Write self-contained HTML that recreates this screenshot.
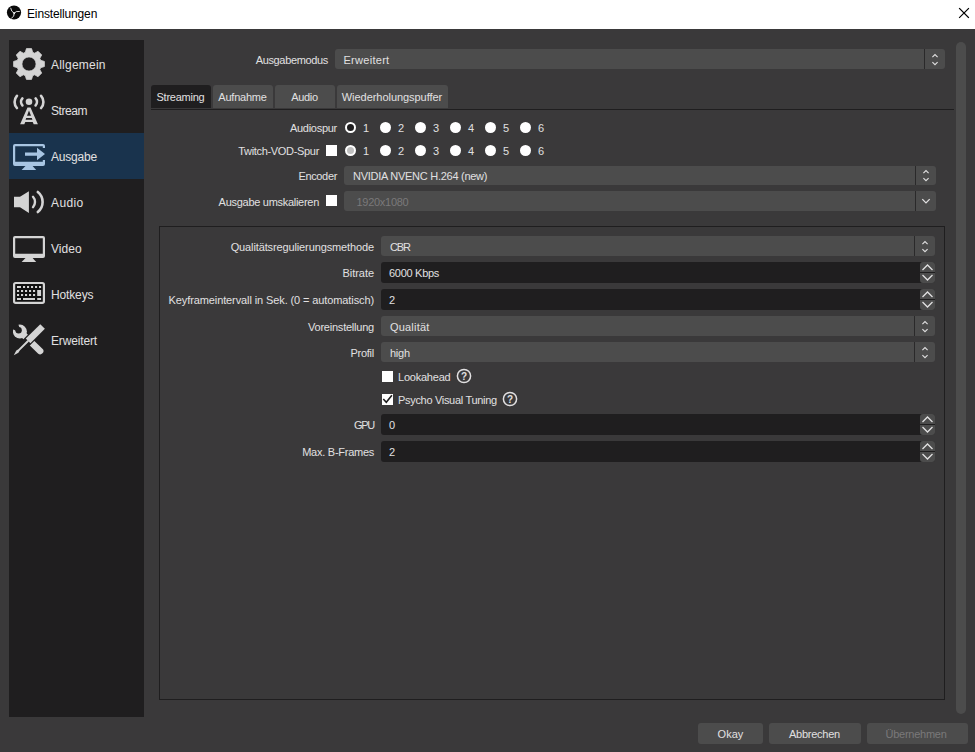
<!DOCTYPE html>
<html lang="de">
<head>
<meta charset="utf-8">
<title>Einstellungen</title>
<style>
*{box-sizing:border-box;margin:0;padding:0}
html,body{width:975px;height:752px;overflow:hidden;background:#3a393a}
body{position:relative;font-family:"Liberation Sans",sans-serif;font-size:11px;color:#e1e0e1;line-height:14px}
.abs,.t,.lbl,.combo,.spin,.cb,.rd,.btn,.tab,.item{position:absolute}
.t,.lbl{white-space:nowrap;height:14px}
.lbl{text-align:right}
#titlebar{left:0;top:0;width:975px;height:29px;background:#fff}
#title{left:27px;top:6px;font-size:12px;color:#000;height:16px;line-height:16px}
#sidebar{left:9px;top:40px;width:135px;height:677px;background:#1f1e1f}
.item{left:0;width:135px;height:46px}
.item.sel{background:#19334d}
.item>svg{position:absolute;left:4px;top:7px;width:32px;height:32px}
.item>span{position:absolute;left:42px;top:17px;height:14px;white-space:nowrap;font-size:12px}
.combo{background:#4c4c4c;border-radius:3px;height:20px}
.combo .sep{position:absolute;right:20px;top:0;width:1px;height:100%;background:#2a292a}
.combo .v{position:absolute;left:9px;top:4px;white-space:nowrap}
.combo svg{position:absolute;right:0;top:0;width:20px;height:20px}
.combo.dis .v{color:#7a797a}
.spin{background:#1f1e1f;border-radius:3px;height:21px}
.spin .v{position:absolute;left:8px;top:4px;white-space:nowrap}
.spin .ud{position:absolute;right:0;top:0;width:15px;height:21px;background:#4c4c4c;border-radius:3px}
.spin .ud i{position:absolute;left:0;top:10px;width:15px;height:1px;background:#1f1e1f}
.spin .ud svg{position:absolute;left:0;top:0;width:15px;height:21px}
.cb{width:11px;height:11px;background:#fff}
.rd{width:11px;height:11px;border-radius:50%;background:#fff}
.rd.on{background:#1f1e1f;border:2px solid #fff}
.rd.ond{background:#c0c0c0;border:2px solid #fff}
.tab{top:85px;height:23px;padding-right:1px;background:#4c4c4c;border-top-left-radius:3px;border-top-right-radius:3px;text-align:center;line-height:24px}
.tab.sel{background:#1f1e1f}
.btn{top:723px;height:21px;background:#4c4c4c;border-radius:3px;text-align:center;line-height:23px}
.btn.dis{color:#7a797a}
</style>
</head>
<body>
<div id="titlebar" class="abs"></div>
<svg class="abs" style="left:6px;top:5.4px;width:16px;height:16px" viewBox="0 0 16 16">
<circle cx="8" cy="7.5" r="7.1" fill="#0a0a0a"/>
<g fill="none" stroke="#e6e6e6" stroke-width="0.95" stroke-linecap="round">
<path d="M8.1 8.3Q5 6.6 4.7 3.2"/>
<path d="M8.1 8.3Q9.6 5.6 13.4 6.4"/>
<path d="M8.1 8.3Q8.9 11.6 5.6 13.2"/>
</g>
<path d="M7 7.4L9.3 7.2L8.6 9.6Z" fill="#fff"/>
</svg>
<div id="title" class="t"><span style="letter-spacing:-0.146px">Einstellungen</span></div>
<svg class="abs" style="left:958px;top:7px;width:13px;height:13px" viewBox="0 0 13 13"><path d="M1.5 1.5l9 9M10.5 1.5l-9 9" stroke="#000" stroke-width="1.1" stroke-linecap="square" fill="none"/></svg>

<div id="sidebar" class="abs">
<div class="item" style="top:1px"><svg viewBox="0 0 32 32" id="ic-gear"><path fill="#d4d4d4" stroke="#d4d4d4" stroke-width="0.8" stroke-linejoin="round" fill-rule="evenodd" d="M12.33 4.36 L13.43 0.61 L18.57 0.61 L19.67 4.36 L21.63 5.18 L25.06 3.30 L28.70 6.94 L26.82 10.37 L27.64 12.33 L31.39 13.43 L31.39 18.57 L27.64 19.67 L26.82 21.63 L28.70 25.06 L25.06 28.70 L21.63 26.82 L19.67 27.64 L18.57 31.39 L13.43 31.39 L12.33 27.64 L10.37 26.82 L6.94 28.70 L3.30 25.06 L5.18 21.63 L4.36 19.67 L0.61 18.57 L0.61 13.43 L4.36 12.33 L5.18 10.37 L3.30 6.94 L6.94 3.30 L10.37 5.18Z M8.9 16 a7.1 7.1 0 1 0 14.2 0 a7.1 7.1 0 1 0 -14.2 0Z"/></svg><span><span style="letter-spacing:0.22px">Allgemein</span></span></div>
<div class="item" style="top:47px"><svg viewBox="0 0 32 32" id="ic-stream"><circle cx="16" cy="7.8" r="3.3" fill="#d4d4d4"/>
<g fill="none" stroke="#d4d4d4" stroke-width="2.6" stroke-linecap="round"><path d="M3.9 1.8A9.2 9.2 0 0 0 3.9 14"/><path d="M28.1 1.8A9.2 9.2 0 0 1 28.1 14"/><path d="M9.4 4.4A5.3 5.3 0 0 0 9.4 11.4"/><path d="M22.6 4.4A5.3 5.3 0 0 1 22.6 11.4"/></g>
<path fill="#d4d4d4" fill-rule="evenodd" d="M14.5 13.5H17.5L24.9 30.3H20.7L19.7 28.1H12.3L11.3 30.3H7.1Z M16 16.4L18 21.7H14Z M13.2 24H18.8L19.4 25.8H12.6Z"/></svg><span><span style="letter-spacing:-0.417px">Stream</span></span></div>
<div class="item sel" style="top:93px"><svg viewBox="0 0 32 32" id="ic-out"><path fill="#a8c5e2" fill-rule="evenodd" d="M2 4H30A2 2 0 0 1 32 6V8H29.8V6.2H2.2V21.7H29.8V20H32V24A2 2 0 0 1 30 26H2A2 2 0 0 1 0 24V6A2 2 0 0 1 2 4Z"/>
<path fill="#a8c5e2" d="M12.5 26H19.6L23.2 30H8.6Z"/>
<path fill="#a8c5e2" d="M12 12.4H24V7.7L32 14L24 20.3V15.8H12Z"/></svg><span><span style="letter-spacing:-0.200px">Ausgabe</span></span></div>
<div class="item" style="top:139px"><svg viewBox="0 0 32 32" id="ic-audio"><path fill="#d4d4d4" d="M1 10.8H7L15.9 5.3V27L7 21.2H1Z"/>
<g fill="none" stroke="#d4d4d4" stroke-width="2.4" stroke-linecap="round"><path d="M20 10.8A7.8 7.8 0 0 1 20 21.2"/><path d="M24.8 6A12.8 12.8 0 0 1 24.8 26" stroke-width="2.6"/></g></svg><span><span style="letter-spacing:0.38px">Audio</span></span></div>
<div class="item" style="top:185px"><svg viewBox="0 0 32 32" id="ic-video"><path fill="#d4d4d4" fill-rule="evenodd" d="M2 4H30A2 2 0 0 1 32 6V24A2 2 0 0 1 30 26H2A2 2 0 0 1 0 24V6A2 2 0 0 1 2 4Z M2.2 6.2V21.7H29.8V6.2Z"/>
<path fill="#d4d4d4" d="M12.5 26H19.6L23.2 30H8.6Z"/></svg><span><span style="letter-spacing:0.06px">Video</span></span></div>
<div class="item" style="top:231px"><svg viewBox="0 0 32 32" id="ic-keys"><rect x="1.1" y="5" width="29.8" height="19.9" rx="1.6" fill="#111" stroke="#d4d4d4" stroke-width="2.2"/>
<path fill="#d4d4d4" d="M4 8h4v2.1h-4z M10 8h2.1v2.1h-2.1z M14 8h2.1v2.1h-2.1z M18 8h2.1v2.1h-2.1z M22 8h2.1v2.1h-2.1z M26 8h2.1v2.1h-2.1z M4 12h2.1v2.1h-2.1z M8 12h2.1v2.1h-2.1z M12 12h2.1v2.1h-2.1z M16 12h2.1v2.1h-2.1z M20 12h2.1v2.1h-2.1z M4 16h2.1v2.1h-2.1z M8 16h2.1v2.1h-2.1z M12 16h2.1v2.1h-2.1z M16 16h2.1v2.1h-2.1z M20 16h2.1v2.1h-2.1z M24.2 12h3.9v6.1h-3.9z M4 20h4v2.1h-4z M10 20h12v2.1h-12z M24.2 20h3.9v2.1h-3.9z"/></svg><span><span style="letter-spacing:-0.143px">Hotkeys</span></span></div>
<div class="item" style="top:277px"><svg viewBox="0 0 32 32" id="ic-adv"><path d="M7 7.5L27.2 27.1" stroke="#d4d4d4" stroke-width="6.4" stroke-linecap="round" fill="none"/>
<circle cx="6.9" cy="7.6" r="7" fill="#d4d4d4"/>
<circle cx="5.6" cy="6.2" r="3.2" fill="#1f1e1f"/>
<path d="M5.6 6.2L-1 3 3 -1Z" fill="#1f1e1f" stroke="#1f1e1f" stroke-width="3.4" stroke-linejoin="round"/>
<g transform="rotate(45 16 16)"><rect x="11.5" y="-3" width="9" height="30" fill="#1f1e1f"/><rect x="12.75" y="-3.2" width="6.5" height="20.5" fill="#d4d4d4"/><path fill="#d4d4d4" d="M15 17h2v13l.5 2.5-1.5 5-1.5-5 .5-2.5z"/></g></svg><span><span style="letter-spacing:-0.144px">Erweitert</span></span></div>
</div>

<!-- scrollbar -->
<div class="abs" style="left:956px;top:42px;width:10px;height:672px;background:#4c4c4c;border-radius:5px"></div>

<!-- top row -->
<div class="lbl" style="left:228px;width:100px;top:53px"><span style="letter-spacing:-0.342px">Ausgabemodus</span></div>
<div class="combo" style="left:335px;top:49px;width:610px"><span class="v" style="left:8.5px"><span style="letter-spacing:0.28px">Erweitert</span></span><div class="sep"></div><svg viewBox="0 0 20 20"><path d="M7.4 8.1l2.6-2.6 2.6 2.6M7.4 13.1l2.6 2.6 2.6-2.6" fill="none" stroke="#e1e0e1" stroke-width="1.1"/></svg></div>

<!-- tabs -->
<div class="tab sel" style="left:151px;width:60px"><span style="letter-spacing:-0.233px">Streaming</span></div>
<div class="tab" style="left:213px;width:60px"><span style="letter-spacing:-0.225px">Aufnahme</span></div>
<div class="tab" style="left:275px;width:60px"><span style="letter-spacing:-0.340px">Audio</span></div>
<div class="tab" style="left:337px;width:111px"><span style="letter-spacing:-0.047px">Wiederholungspuffer</span></div>
<div class="abs" style="left:151px;top:109px;width:803px;height:1px;background:#1f1e1f"></div>

<!-- audio track rows -->
<div class="lbl" style="left:237px;width:100px;top:121px"><span style="letter-spacing:-0.278px">Audiospur</span></div>
<div class="lbl" style="left:199px;width:120px;top:144px"><span style="letter-spacing:-0.320px">Twitch-VOD-Spur</span></div>
<div class="cb" style="left:326px;top:145px"></div>
<div class="rd on" style="left:345px;top:122px"></div><div class="t" style="left:363px;top:121px">1</div>
<div class="rd" style="left:380px;top:122px"></div><div class="t" style="left:398px;top:121px">2</div>
<div class="rd" style="left:415px;top:122px"></div><div class="t" style="left:433px;top:121px">3</div>
<div class="rd" style="left:450px;top:122px"></div><div class="t" style="left:468px;top:121px">4</div>
<div class="rd" style="left:485px;top:122px"></div><div class="t" style="left:503px;top:121px">5</div>
<div class="rd" style="left:520px;top:122px"></div><div class="t" style="left:538px;top:121px">6</div>
<div class="rd ond" style="left:345px;top:145px"></div><div class="t" style="left:363px;top:144px">1</div>
<div class="rd" style="left:380px;top:145px"></div><div class="t" style="left:398px;top:144px">2</div>
<div class="rd" style="left:415px;top:145px"></div><div class="t" style="left:433px;top:144px">3</div>
<div class="rd" style="left:450px;top:145px"></div><div class="t" style="left:468px;top:144px">4</div>
<div class="rd" style="left:485px;top:145px"></div><div class="t" style="left:503px;top:144px">5</div>
<div class="rd" style="left:520px;top:145px"></div><div class="t" style="left:538px;top:144px">6</div>

<div class="lbl" style="left:237px;width:100px;top:169px"><span style="letter-spacing:-0.343px">Encoder</span></div>
<div class="combo" style="left:344px;top:166px;width:592px;height:19px"><span class="v" style="top:3px"><span style="letter-spacing:-0.267px">NVIDIA NVENC H.264 (new)</span></span><div class="sep"></div><svg viewBox="0 0 20 20" style="top:-1px"><path d="M7.4 8.1l2.6-2.6 2.6 2.6M7.4 13.1l2.6 2.6 2.6-2.6" fill="none" stroke="#e1e0e1" stroke-width="1.1"/></svg></div>

<div class="lbl" style="left:199px;width:120px;top:195px"><span style="letter-spacing:-0.284px">Ausgabe umskalieren</span></div>
<div class="cb" style="left:326px;top:195px"></div>
<div class="combo dis" style="left:344px;top:191px;width:592px"><span class="v" style="left:12.5px"><span style="letter-spacing:-0.278px">1920x1080</span></span><div class="sep"></div><svg viewBox="0 0 20 20"><path d="M6.3 8.1l3.7 3.8 3.7-3.8" fill="none" stroke="#e1e0e1" stroke-width="1.3"/></svg></div>

<!-- frame -->
<div class="abs" style="left:159px;top:226px;width:786px;height:474px;border:1px solid #1f1e1f"></div>

<div class="lbl" style="left:164px;width:210px;top:240px"><span style="letter-spacing:-0.121px">Qualitätsregulierungsmethode</span></div>
<div class="combo" style="left:381px;top:236px;width:554px"><span class="v"><span style="letter-spacing:-1.133px">CBR</span></span><div class="sep"></div><svg viewBox="0 0 20 20"><path d="M7.4 8.1l2.6-2.6 2.6 2.6M7.4 13.1l2.6 2.6 2.6-2.6" fill="none" stroke="#e1e0e1" stroke-width="1.1"/></svg></div>

<div class="lbl" style="left:164px;width:210px;top:266px"><span style="letter-spacing:-0.029px">Bitrate</span></div>
<div class="spin" style="left:381px;top:262px;width:554px"><span class="v"><span style="letter-spacing:-0.289px">6000 Kbps</span></span><div class="ud"><i></i><svg viewBox="0 0 15 21"><path d="M2.5 8l5-5 5 5M2.5 13l5 5 5-5" fill="none" stroke="#e1e0e1" stroke-width="1.3"/></svg></div></div>

<div class="lbl" style="left:164px;width:210px;top:293px"><span style="letter-spacing:-0.107px">Keyframeintervall in Sek. (0 = automatisch)</span></div>
<div class="spin" style="left:381px;top:289px;width:554px"><span class="v">2</span><div class="ud"><i></i><svg viewBox="0 0 15 21"><path d="M2.5 8l5-5 5 5M2.5 13l5 5 5-5" fill="none" stroke="#e1e0e1" stroke-width="1.3"/></svg></div></div>

<div class="lbl" style="left:164px;width:210px;top:320px"><span style="letter-spacing:-0.221px">Voreinstellung</span></div>
<div class="combo" style="left:381px;top:316px;width:554px"><span class="v"><span style="letter-spacing:0.19px">Qualität</span></span><div class="sep"></div><svg viewBox="0 0 20 20"><path d="M7.4 8.1l2.6-2.6 2.6 2.6M7.4 13.1l2.6 2.6 2.6-2.6" fill="none" stroke="#e1e0e1" stroke-width="1.1"/></svg></div>

<div class="lbl" style="left:164px;width:210px;top:346px"><span style="letter-spacing:-0.250px">Profil</span></div>
<div class="combo" style="left:381px;top:342px;width:554px"><span class="v"><span style="letter-spacing:-0.250px">high</span></span><div class="sep"></div><svg viewBox="0 0 20 20"><path d="M7.4 8.1l2.6-2.6 2.6 2.6M7.4 13.1l2.6 2.6 2.6-2.6" fill="none" stroke="#e1e0e1" stroke-width="1.1"/></svg></div>

<div class="cb" style="left:382px;top:371px"></div>
<div class="t" style="left:398px;top:370px"><span style="letter-spacing:-0.22px">Lookahead</span></div>
<svg class="abs" style="left:456px;top:368.3px;width:16px;height:16px" viewBox="0 0 16 16"><circle cx="8" cy="8" r="6.6" fill="none" stroke="#e1e0e1" stroke-width="1.5"/><text x="8" y="11.6" text-anchor="middle" font-family="Liberation Sans, sans-serif" font-weight="bold" font-size="10" fill="#e1e0e1">?</text></svg>

<div class="cb" style="left:382px;top:394px"><svg viewBox="0 0 11 11" style="position:absolute;left:0;top:0;width:11px;height:11px"><path d="M1.3 5l3 3.3 5.6-7" fill="none" stroke="#1f1e1f" stroke-width="1.6"/></svg></div>
<div class="t" style="left:398px;top:393px"><span style="letter-spacing:-0.31px">Psycho Visual Tuning</span></div>
<svg class="abs" style="left:501.8px;top:391px;width:16px;height:16px" viewBox="0 0 16 16"><circle cx="8" cy="8" r="6.6" fill="none" stroke="#e1e0e1" stroke-width="1.5"/><text x="8" y="11.6" text-anchor="middle" font-family="Liberation Sans, sans-serif" font-weight="bold" font-size="10" fill="#e1e0e1">?</text></svg>

<div class="lbl" style="left:164px;width:210px;top:418px"><span style="letter-spacing:-1.267px">GPU</span></div>
<div class="spin" style="left:381px;top:414px;width:554px"><span class="v">0</span><div class="ud"><i></i><svg viewBox="0 0 15 21"><path d="M2.5 8l5-5 5 5M2.5 13l5 5 5-5" fill="none" stroke="#e1e0e1" stroke-width="1.3"/></svg></div></div>

<div class="lbl" style="left:164px;width:210px;top:445px"><span style="letter-spacing:-0.262px">Max. B-Frames</span></div>
<div class="spin" style="left:381px;top:441px;width:554px"><span class="v">2</span><div class="ud"><i></i><svg viewBox="0 0 15 21"><path d="M2.5 8l5-5 5 5M2.5 13l5 5 5-5" fill="none" stroke="#e1e0e1" stroke-width="1.3"/></svg></div></div>

<!-- buttons -->
<div class="btn" style="left:698px;width:65px"><span style="letter-spacing:0.025px">Okay</span></div>
<div class="btn" style="left:769px;width:92px;padding-right:1px"><span style="letter-spacing:-0.244px">Abbrechen</span></div>
<div class="btn dis" style="left:867px;width:101px;padding-right:3px"><span style="letter-spacing:-0.260px">Übernehmen</span></div>
</body>
</html>
